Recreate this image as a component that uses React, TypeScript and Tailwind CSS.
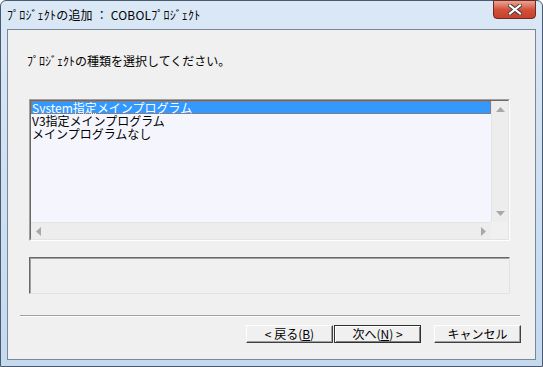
import React from 'react';

const items = ['System指定メインプログラム', 'V3指定メインプログラム', 'メインプログラムなし'];

const font = { fontFamily: '"Noto Sans CJK JP", "Liberation Sans", sans-serif' };

const Btn = ({ children, main }: { children: React.ReactNode; main?: boolean }) => (
  <div
    className={`w-[87px] h-[18px] flex items-center justify-center text-[12px] leading-none text-black bg-[#f0f0f0] border ${
      main
        ? 'border-[#303030] shadow-[inset_1px_1px_0_#fff,inset_-1px_-1px_0_#808080]'
        : 'border-t-white border-l-white border-b-[#404040] border-r-[#404040] shadow-[inset_-1px_-1px_0_#a0a0a0]'
    }`}
  >
    {children}
  </div>
);

const App = () => {
  return (
    <div className="w-[543px] h-[367px] bg-white" style={font}>
      <div className="w-[543px] h-[367px] rounded-t-[6px] border border-[#4a5a6e] bg-gradient-to-b from-[#dbe8f6] via-[#cfe0f2] to-[#c5d9ef] flex flex-col px-[6px] pb-[6px]">
        {/* title bar */}
        <div className="h-[28px] relative flex items-center">
          <span className="text-[12px] text-black tracking-[0.2px]">ﾌﾟﾛｼﾞｪｸﾄの追加 ： COBOLﾌﾟﾛｼﾞｪｸﾄ</span>
          <div className="absolute right-[0px] top-[-1px] w-[43px] h-[19px] rounded-b-[4px] border border-[#6b2a22] bg-gradient-to-b from-[#e8a595] via-[#d3513b] to-[#c7402c] flex items-center justify-center">
            <svg width="14" height="11" viewBox="0 0 14 11">
              <path d="M2 1.5 L12 9.5 M12 1.5 L2 9.5" stroke="#3a3a3a" strokeWidth="4" strokeLinecap="square" />
              <path d="M2 1.5 L12 9.5 M12 1.5 L2 9.5" stroke="#ffffff" strokeWidth="2.2" strokeLinecap="square" />
            </svg>
          </div>
        </div>

        {/* client area */}
        <div className="flex-1 border border-[#7a8796] bg-[#f0f0f0] flex flex-col">
          <div className="mt-[24px] ml-[19px] text-[12px] leading-[14px] text-black">ﾌﾟﾛｼﾞｪｸﾄの種類を選択してください。</div>

          {/* list box */}
          <div className="mt-[31px] ml-[21px] w-[481px] h-[142px] border border-t-[#a0a0a0] border-l-[#a0a0a0] border-b-white border-r-white">
            <div className="w-full h-full border border-t-[#696969] border-l-[#696969] border-b-[#e3e3e3] border-r-[#e3e3e3] bg-[#f5f6fd] grid grid-cols-[1fr_17px] grid-rows-[1fr_17px]">
              <div className="overflow-hidden">
                {items.map((it, i) => (
                  <div
                    key={it}
                    className={`h-[13px] pl-[1px] text-[12px] leading-[13px] whitespace-nowrap ${
                      i === 0 ? 'bg-[#3399ff] text-white outline outline-1 outline-dotted outline-[#c8641e] -outline-offset-1' : 'text-black'
                    }`}
                  >
                    {it}
                  </div>
                ))}
              </div>
              {/* vertical scrollbar */}
              <div className="bg-[#ededed] border-l border-[#e4e4e4] flex flex-col items-center justify-between py-[6px]">
                <svg width="9" height="5" viewBox="0 0 9 5"><path d="M0 5 L4.5 0 L9 5 Z" fill="#a8a8a8" /></svg>
                <svg width="9" height="5" viewBox="0 0 9 5"><path d="M0 0 L4.5 5 L9 0 Z" fill="#a8a8a8" /></svg>
              </div>
              {/* horizontal scrollbar */}
              <div className="bg-[#ededed] border-t border-[#e4e4e4] flex items-center justify-between px-[5px]">
                <svg width="5" height="9" viewBox="0 0 5 9"><path d="M5 0 L0 4.5 L5 9 Z" fill="#a8a8a8" /></svg>
                <svg width="5" height="9" viewBox="0 0 5 9"><path d="M0 0 L5 4.5 L0 9 Z" fill="#a8a8a8" /></svg>
              </div>
              <div className="bg-[#f0f0f0]" />
            </div>
          </div>

          {/* status box */}
          <div className="mt-[16px] ml-[21px] w-[481px] h-[37px] border border-t-[#696969] border-l-[#696969] border-b-[#e3e3e3] border-r-[#e3e3e3] shadow-[inset_1px_1px_0_#a0a0a0]" />

          {/* separator */}
          <div className="mt-[21px] ml-[12px] w-[500px] h-[2px] border-t border-[#a0a0a0] border-b border-b-white" />

          {/* buttons */}
          <div className="mt-[8px] ml-[238px] flex">
            <Btn>&lt; 戻る(<span className="underline">B</span>)</Btn>
            <div className="ml-[1px]">
              <Btn main>
                次へ(<span className="underline">N</span>) &gt;
              </Btn>
            </div>
            <div className="ml-[13px]">
              <Btn>キャンセル</Btn>
            </div>
          </div>
        </div>
      </div>
    </div>
  );
};

export default App;
